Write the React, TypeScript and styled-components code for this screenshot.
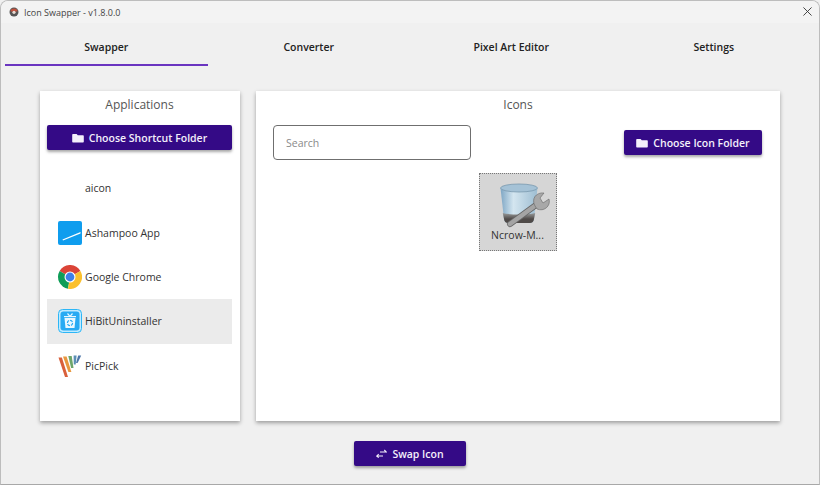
import React from 'react'
import styled, { createGlobalStyle } from 'styled-components'

const GlobalStyle = createGlobalStyle`
  html, body {
    margin: 0;
    padding: 0;
    background: #f0f0f0;
  }
  * {
    box-sizing: border-box;
  }
`

const Window = styled.div`
  width: 820px;
  height: 485px;
  display: flex;
  flex-direction: column;
  background: #f0f0f0;
  border: 1px solid #bdbdbd;
  border-bottom-color: #a8a8a8;
  border-radius: 8px 8px 0 0;
  font-family: "Open Sans", "Noto Sans", sans-serif;
  color: #2b2b2b;
  overflow: hidden;
`
const TitleBar = styled.div`
  height: 22px;
  flex: none;
  display: flex;
  align-items: center;
  padding: 0 4px 0 8px;
  background: #f3f3f3;
`
const TitleText = styled.span`
  margin-left: 5px;
  font-size: 9px;
  color: #444;
  flex: 1;
`
const CloseButton = styled.div`
  width: 12px;
  height: 12px;
  display: flex;
  padding-top: 1px;
`
const Tabs = styled.div`
  height: 43px;
  flex: none;
  display: grid;
  grid-template-columns: repeat(4, 1fr);
  padding: 0 4px;
`
const Tab = styled.div<{ $active?: boolean }>`
  display: flex;
  align-items: center;
  justify-content: center;
  padding-top: 6px;
  font-size: 10.5px;
  font-weight: 600;
  color: #222;
  border-bottom: 2px solid ${p => (p.$active ? '#6a35c0' : 'transparent')};
`
const Main = styled.div`
  flex: 1;
  display: flex;
  gap: 16px;
  padding: 25px 39px 0 39px;
`
const Panel = styled.section<{ $width?: number }>`
  height: 330px;
  background: #fff;
  box-shadow: 0 2px 4px rgba(0, 0, 0, 0.35);
  ${p => (p.$width ? `width: ${p.$width}px; flex: none;` : 'flex: 1;')}
`
const AppPanel = styled(Panel)`
  padding: 6px 8px 0 7px;
`
const PanelTitle = styled.div`
  text-align: center;
  font-size: 12px;
  line-height: 16px;
  color: #555;
`
const PrimaryButton = styled.button<{ $width: number }>`
  width: ${p => p.$width}px;
  height: 25px;
  display: flex;
  align-items: center;
  justify-content: center;
  gap: 5px;
  padding: 0;
  border: none;
  border-radius: 2px;
  background: #340a86;
  color: #f4f0fb;
  font-family: inherit;
  font-size: 10.5px;
  font-weight: 600;
  box-shadow: 0 2px 3px rgba(0, 0, 0, 0.35);
`
const ChooseShortcut = styled(PrimaryButton)`
  margin-top: 12px;
`
const AppList = styled.div`
  margin-top: 16px;
  display: flex;
  flex-direction: column;
`
const AppRow = styled.div<{ $selected?: boolean }>`
  height: 44.4px;
  display: flex;
  align-items: center;
  gap: 3px;
  padding-left: 11px;
  font-size: 10.5px;
  color: #333;
  background: ${p => (p.$selected ? '#ebebeb' : 'transparent')};
`
const AppIconSlot = styled.div`
  width: 24px;
  height: 24px;
  flex: none;
`
const IconsPanel = styled(Panel)`
  padding: 6px 17px 0 17px;
`
const Toolbar = styled.div`
  margin-top: 12px;
  display: flex;
  align-items: center;
  justify-content: space-between;
  padding-right: 1px;
`
const SearchInput = styled.input`
  width: 198px;
  height: 35px;
  padding: 0 12px;
  border: 1px solid #6f6f6f;
  border-radius: 4px;
  outline: none;
  font-family: inherit;
  font-size: 10.5px;
  &::placeholder {
    color: #8a8a8a;
  }
`
const IconGrid = styled.div`
  margin-top: 13px;
  display: flex;
  justify-content: center;
  padding-right: 1px;
`
const IconTile = styled.div`
  width: 78px;
  height: 78px;
  display: flex;
  flex-direction: column;
  align-items: center;
  padding-top: 7px;
  background: #d6d6d6;
  border: 1px dotted #777;
  font-size: 10.5px;
  line-height: 13px;
  color: #333;
`
const Footer = styled.div`
  height: 63px;
  flex: none;
  display: flex;
  justify-content: center;
  padding-top: 20px;
`

const FolderIcon = () => (
  <svg width="12" height="12" viewBox="0 0 12 12">
    <path d="M1 2h3.6l1.2 1.3H11a.8.8 0 0 1 .8.8v5.7a.8.8 0 0 1-.8.8H1a.8.8 0 0 1-.8-.8V2.8A.8.8 0 0 1 1 2z" fill="#f4f0fb" />
  </svg>
)

const SwapIcon = () => (
  <svg width="11" height="10" viewBox="0 0 11 10" fill="none" stroke="#f4f0fb" strokeWidth="1.1">
    <path d="M4 3h6.5M8.3 1l2 2-2 0" />
    <path d="M7 7H.5M2.7 5.2 .7 7l2 1.6" />
  </svg>
)

const AppTitleIcon = () => (
  <svg width="10" height="10" viewBox="0 0 10 10">
    <circle cx="5" cy="5" r="4.5" fill="#555" />
    <path d="M1.5 4.5a3.5 3 0 0 1 7 0z" fill="#c0503c" />
    <circle cx="5" cy="5.3" r="1.6" fill="#e8d8d0" />
  </svg>
)

const AshampooIcon = () => (
  <svg width="24" height="24" viewBox="0 0 24 24">
    <rect width="24" height="24" rx="2" fill="#0f9dee" />
    <path d="M4.5 18.6 22.5 11 22.5 12.6 5 19.6z" fill="#fff" />
  </svg>
)

const ChromeIcon = () => (
  <svg width="24" height="24" viewBox="0 0 24 24">
    <path d="M12 12 1.6 6A12 12 0 0 1 22.4 6z" fill="#db4437" />
    <path d="M12 12 1.6 6A12 12 0 0 0 10 23.8z" fill="#0f9d58" />
    <path d="M12 12 22.4 6A12 12 0 0 1 10 23.8z" fill="#fbc02d" />
    <circle cx="12" cy="12" r="5.5" fill="#fff" />
    <circle cx="12" cy="12" r="4.4" fill="#3f7fe8" />
  </svg>
)

const HiBitIcon = () => (
  <svg width="24" height="24" viewBox="0 0 24 24">
    <rect x=".5" y=".5" width="23" height="23" rx="4" fill="#bfeaff" stroke="#2cb6f6" />
    <rect x="2.5" y="2.5" width="19" height="19" rx="3" fill="#27aaf3" />
    <path d="M6.5 9h11l-1 10h-9z" fill="#e9f8ff" />
    <path d="M6 7.6h12" stroke="#e9f8ff" strokeWidth="1.2" />
    <path d="M9.5 4.5 12 7.4l2.5-2.9" fill="none" stroke="#e9f8ff" strokeWidth="1.2" />
    <circle cx="12" cy="14" r="2.6" fill="none" stroke="#27aaf3" strokeWidth="1.2" strokeDasharray="3 1" />
  </svg>
)

const PicPickIcon = () => (
  <svg width="24" height="24" viewBox="0 0 24 24">
    <path d="M.5 3.5h3.4L10 23H7z" fill="#d9603b" />
    <path d="M5 2.5h3.6l4.8 15.5h-3z" fill="#e8983f" />
    <path d="M10.3 2h3.4l1.8 12h-2.4z" fill="#6ea66b" />
    <path d="M15.6 1.5h3l-.9 9h-1.9z" fill="#5b8fb4" />
    <path d="M20.2 1.5h3l-3.6 7.5h-1.6z" fill="#4d76a8" />
  </svg>
)

const TrashWrenchIcon = () => (
  <svg width="64" height="48" viewBox="0 0 64 48">
    <defs>
      <linearGradient id="glass" x1="0" x2="1">
        <stop offset="0" stopColor="#7ea6c4" />
        <stop offset="0.35" stopColor="#d4e6f0" />
        <stop offset="1" stopColor="#9dbdd2" />
      </linearGradient>
      <linearGradient id="dregs" x1="0" x2="0" y1="0" y2="1">
        <stop offset="0" stopColor="#9a9c9c" />
        <stop offset="0.6" stopColor="#4f4a48" />
      </linearGradient>
    </defs>
    <path d="M14.5 7h37L48 38q-.5 4-4 4H22q-3.500 0-4-4z" fill="url(#glass)" />
    <path d="M16.800 32c8 2 24 2 32.400 0L48 38q-.5 4-4 4H22q-3.500 0-4-4z" fill="url(#dregs)" />
    <ellipse cx="33" cy="7" rx="18.500" ry="4" fill="#a5c2d6" stroke="#7a99ae" strokeWidth=".8" />
    <path d="M24 43 50 24" stroke="#666" strokeWidth="6" strokeLinecap="round" />
    <path d="M24 43 50 24" stroke="#a4a4a4" strokeWidth="4.600" strokeLinecap="round" />
    <path d="M49 25C45 18 50 11 58 12L54 17 57 22 63 18C65 25 58 31 51 28z" fill="#a8a8a8" stroke="#666" strokeWidth=".6" />
  </svg>
)

const apps = [
  { name: 'aicon', icon: null },
  { name: 'Ashampoo App', icon: <AshampooIcon /> },
  { name: 'Google Chrome', icon: <ChromeIcon /> },
  { name: 'HiBitUninstaller', icon: <HiBitIcon />, selected: true },
  { name: 'PicPick', icon: <PicPickIcon /> },
]

const App: React.FC = () => {
  return (
    <Window>
      <GlobalStyle />
      <TitleBar>
        <AppTitleIcon />
        <TitleText>Icon Swapper - v1.8.0.0</TitleText>
        <CloseButton>
          <svg width="9" height="9" viewBox="0 0 10 10" stroke="#333" strokeWidth="1">
            <path d="M.5.5l9 9M9.5.5l-9 9" />
          </svg>
        </CloseButton>
      </TitleBar>
      <Tabs>
        <Tab $active>Swapper</Tab>
        <Tab>Converter</Tab>
        <Tab>Pixel Art Editor</Tab>
        <Tab>Settings</Tab>
      </Tabs>
      <Main>
        <AppPanel $width={200}>
          <PanelTitle>Applications</PanelTitle>
          <ChooseShortcut $width={185}>
            <FolderIcon />
            Choose Shortcut Folder
          </ChooseShortcut>
          <AppList>
            {apps.map(app => (
              <AppRow key={app.name} $selected={app.selected}>
                <AppIconSlot>{app.icon}</AppIconSlot>
                {app.name}
              </AppRow>
            ))}
          </AppList>
        </AppPanel>
        <IconsPanel>
          <PanelTitle>Icons</PanelTitle>
          <Toolbar>
            <SearchInput placeholder="Search" />
            <PrimaryButton $width={138}>
              <FolderIcon />
              Choose Icon Folder
            </PrimaryButton>
          </Toolbar>
          <IconGrid>
            <IconTile>
              <TrashWrenchIcon />
              Ncrow-M...
            </IconTile>
          </IconGrid>
        </IconsPanel>
      </Main>
      <Footer>
        <PrimaryButton $width={112}>
          <SwapIcon />
          Swap Icon
        </PrimaryButton>
      </Footer>
    </Window>
  )
}

export default App
